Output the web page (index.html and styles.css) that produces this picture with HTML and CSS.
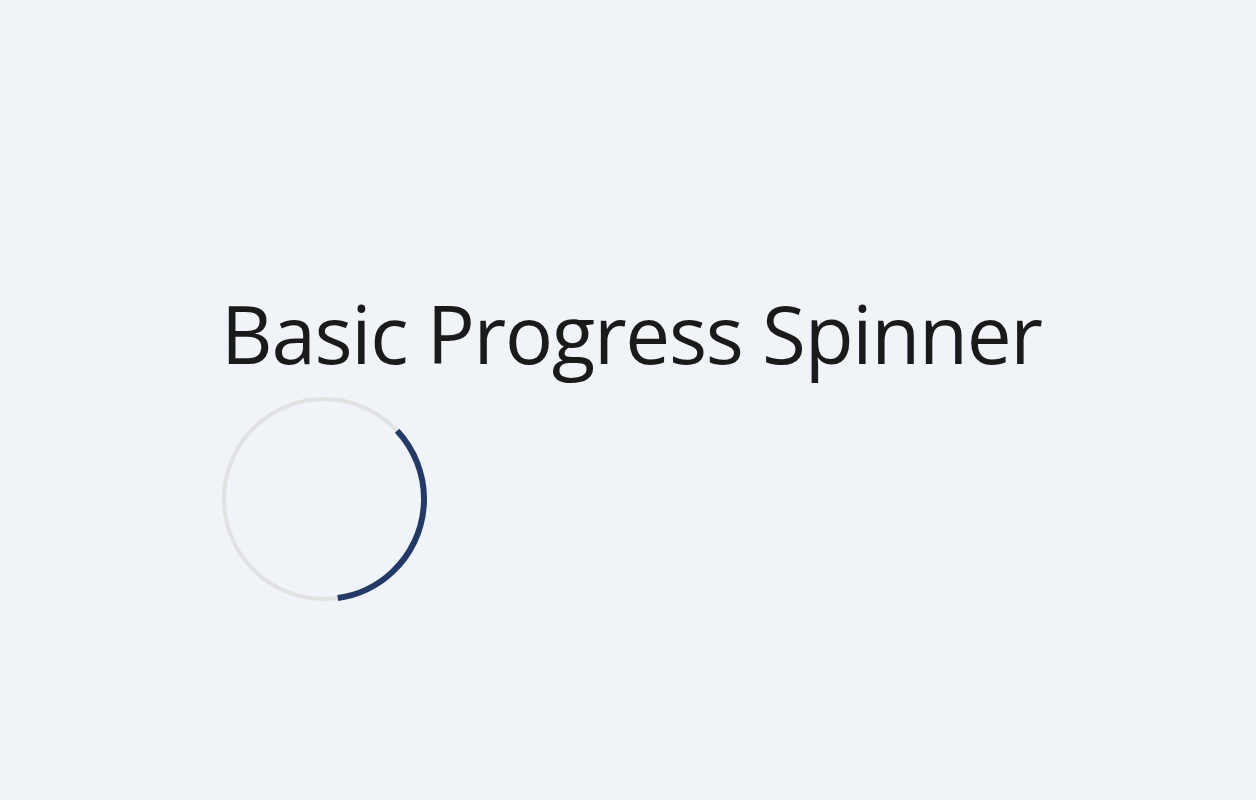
FILE: index.html
```html
<!DOCTYPE html>
<html lang="en">
<head>
    <meta charset="UTF-8">
    <title>Basic Progress Spinner</title>
    <link rel="stylesheet" href="styles.css">
</head>
<body>

    <div class="demo">
        <h2 class="demo-title">Basic Progress Spinner</h2>
        <svg class="spinner" width="206" height="206" viewBox="0 0 206 206">
            <circle class="spinner-track" cx="103" cy="103" r="100"></circle>
            <circle class="spinner-arc" cx="103" cy="103" r="100" transform="rotate(-43 103 103)"></circle>
        </svg>
    </div>

</body>
</html>
```
FILE: styles.css
```css
body {
    margin: 0;
    background: #f0f4f9;
    font-family: 'Open Sans', sans-serif;
    color: #1a1a1a;
}

.demo {
    padding: 285px 0 0 221px;
}

.demo-title {
    margin: 0 0 15px;
    font-size: 80px;
    font-weight: 400;
    line-height: 1.2;
    letter-spacing: -1.3px;
}

.spinner {
    display: block;
}

.spinner-track {
    fill: none;
    stroke: #e2e2e2;
    stroke-width: 4;
}

.spinner-arc {
    fill: none;
    stroke: #233a66;
    stroke-width: 6;
    stroke-dasharray: 218 630;
}
```
